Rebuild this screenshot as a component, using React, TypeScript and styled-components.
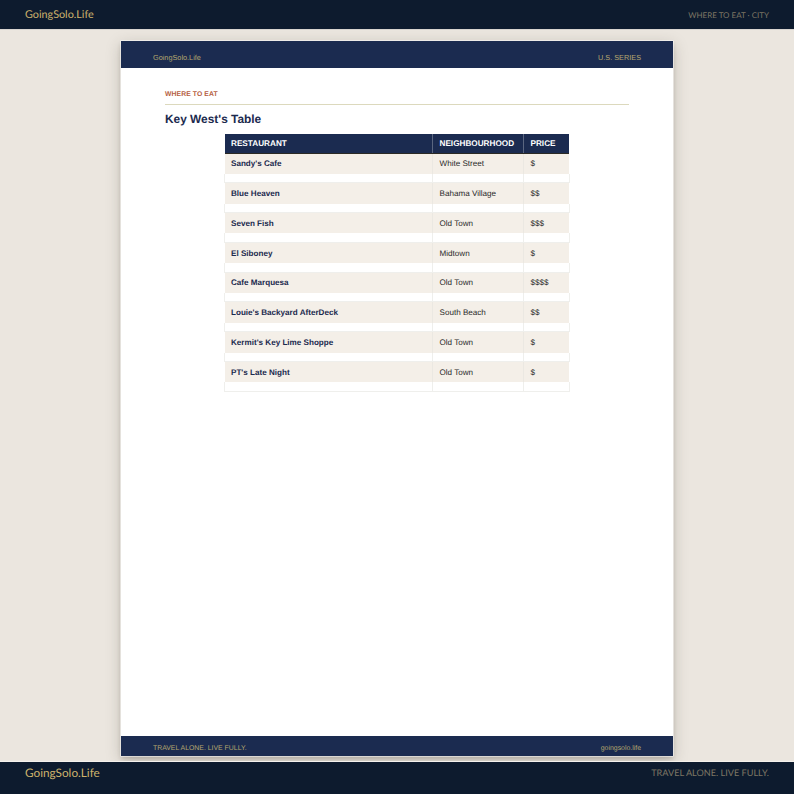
import React from 'react';
import styled, { createGlobalStyle } from 'styled-components';

const GlobalStyle = createGlobalStyle`
  html, body {
    margin: 0;
    padding: 0;
    background: #ebe6df;
  }
  * {
    box-sizing: border-box;
  }
`;

const Shell = styled.div`
  width: 794px;
  height: 794px;
  display: flex;
  flex-direction: column;
  overflow: hidden;
  background: #ebe6df;
  font-family: 'Liberation Sans', Arial, sans-serif;
  text-rendering: geometricPrecision;
`;

const Bar = styled.div<{ $height: number }>`
  height: ${(p) => p.$height}px;
  flex: none;
  display: flex;
  justify-content: space-between;
  align-items: flex-start;
  padding: 0 25px;
  background: #0d1b2e;
  font-family: 'Lato', 'Liberation Sans', sans-serif;
`;

const TopBar = styled(Bar)`
  align-items: center;
  border-bottom: 1px solid #d8d5d0;
`;

const BottomBar = styled(Bar)`
  padding-top: 3px;
  border-top: 1px solid #f4f1ec;
`;

const Brand = styled.span<{ $size: number }>`
  color: #cdb36c;
  font-size: ${(p) => p.$size}px;
  font-weight: 400;
  line-height: 16px;
`;

const BarNote = styled.span<{ $size: number }>`
  color: #7d7664;
  font-size: ${(p) => p.$size}px;
  line-height: 16px;
`;

const Stage = styled.div`
  flex: 1;
  min-height: 0;
  padding: 11px 121px 5px 121px;
`;

const Sheet = styled.div`
  height: 100%;
  display: flex;
  flex-direction: column;
  background: #ffffff;
  box-shadow: 0 0 0 0.5px #ffffff, 0 3px 4px rgba(60, 50, 40, 0.18), 0 4px 14px rgba(60, 50, 40, 0.25);
`;

const SheetBand = styled.div<{ $height: number; $size: number; $top: number }>`
  height: ${(p) => p.$height}px;
  flex: none;
  display: flex;
  justify-content: space-between;
  align-items: center;
  padding: ${(p) => p.$top}px 32px 0 32px;
  background: #1b2b50;
  color: #b5a76f;
  font-size: ${(p) => p.$size}px;
`;

const SheetBody = styled.div`
  flex: 1;
  padding: 22px 44px 0 44px;
`;

const Kicker = styled.div`
  color: #b5603f;
  font-size: 6.8px;
  font-weight: 700;
  line-height: 9px;
  letter-spacing: 0.1px;
  padding-bottom: 4.5px;
  border-bottom: 1.5px solid #dcd9bd;
`;

const Title = styled.h1`
  margin: 6px 0 7.5px;
  color: #1b2a4e;
  font-size: 11.9px;
  font-weight: 700;
  line-height: 16px;
`;

const Table = styled.table`
  width: 344.5px;
  margin-left: 59px;
  border-collapse: collapse;
  table-layout: fixed;
  font-size: 8.1px;
`;

const HeadCell = styled.th<{ $width: number }>`
  width: ${(p) => p.$width}px;
  height: 19px;
  padding: 0 6.5px;
  background: #1b2b50;
  border-left: 1px solid #5a6680;
  border-bottom: 1px solid #2b2a25;
  color: #ffffff;
  font-size: 8.2px;
  font-weight: 700;
  text-align: left;
  &:first-child {
    border-left: none;
  }
`;

const Cell = styled.td<{ $strong?: boolean }>`
  height: 20.8px;
  padding: 0 6.5px;
  background: #f4efe8;
  border-left: 1px solid #ebe8e2;
  color: ${(p) => (p.$strong ? '#1b2a4e' : '#2a2a2a')};
  font-weight: ${(p) => (p.$strong ? 700 : 400)};
  &:first-child {
    border-left: none;
  }
`;

const GapCell = styled.td`
  height: 9px;
  padding: 0;
  background: #ffffff;
  border-left: 1px solid #efefec;
  border-bottom: 1px solid #efefec;
  &:last-child {
    border-right: 1px solid #efefec;
  }
`;

const rows = [
  ["Sandy's Cafe", 'White Street', '$'],
  ['Blue Heaven', 'Bahama Village', '$$'],
  ['Seven Fish', 'Old Town', '$$$'],
  ['El Siboney', 'Midtown', '$'],
  ['Cafe Marquesa', 'Old Town', '$$$$'],
  ["Louie's Backyard AfterDeck", 'South Beach', '$$'],
  ["Kermit's Key Lime Shoppe", 'Old Town', '$'],
  ["PT's Late Night", 'Old Town', '$'],
];

const App = () => {
  return (
    <>
      <GlobalStyle />
      <Shell>
        <TopBar $height={30}>
          <Brand $size={10.8}>GoingSolo.Life</Brand>
          <BarNote $size={8}>WHERE TO EAT · CITY</BarNote>
        </TopBar>
        <Stage>
          <Sheet>
            <SheetBand $height={27} $size={7.3} $top={5}>
              <span>GoingSolo.Life</span>
              <span>U.S. SERIES</span>
            </SheetBand>
            <SheetBody>
              <Kicker>WHERE TO EAT</Kicker>
              <Title>Key West's Table</Title>
              <Table>
                <thead>
                  <tr>
                    <HeadCell $width={208}>RESTAURANT</HeadCell>
                    <HeadCell $width={91}>NEIGHBOURHOOD</HeadCell>
                    <HeadCell $width={45.5}>PRICE</HeadCell>
                  </tr>
                </thead>
                <tbody>
                  {rows.map((row) => (
                    <React.Fragment key={row[0]}>
                      <tr>
                        <Cell $strong>{row[0]}</Cell>
                        <Cell>{row[1]}</Cell>
                        <Cell>{row[2]}</Cell>
                      </tr>
                      <tr>
                        <GapCell />
                        <GapCell />
                        <GapCell />
                      </tr>
                    </React.Fragment>
                  ))}
                </tbody>
              </Table>
            </SheetBody>
            <SheetBand $height={20} $size={6.9} $top={4}>
              <span>TRAVEL ALONE. LIVE FULLY.</span>
              <span>goingsolo.life</span>
            </SheetBand>
          </Sheet>
        </Stage>
        <BottomBar $height={33}>
          <Brand $size={11.75}>GoingSolo.Life</Brand>
          <BarNote $size={9.15}>TRAVEL ALONE. LIVE FULLY.</BarNote>
        </BottomBar>
      </Shell>
    </>
  );
};

export default App;
